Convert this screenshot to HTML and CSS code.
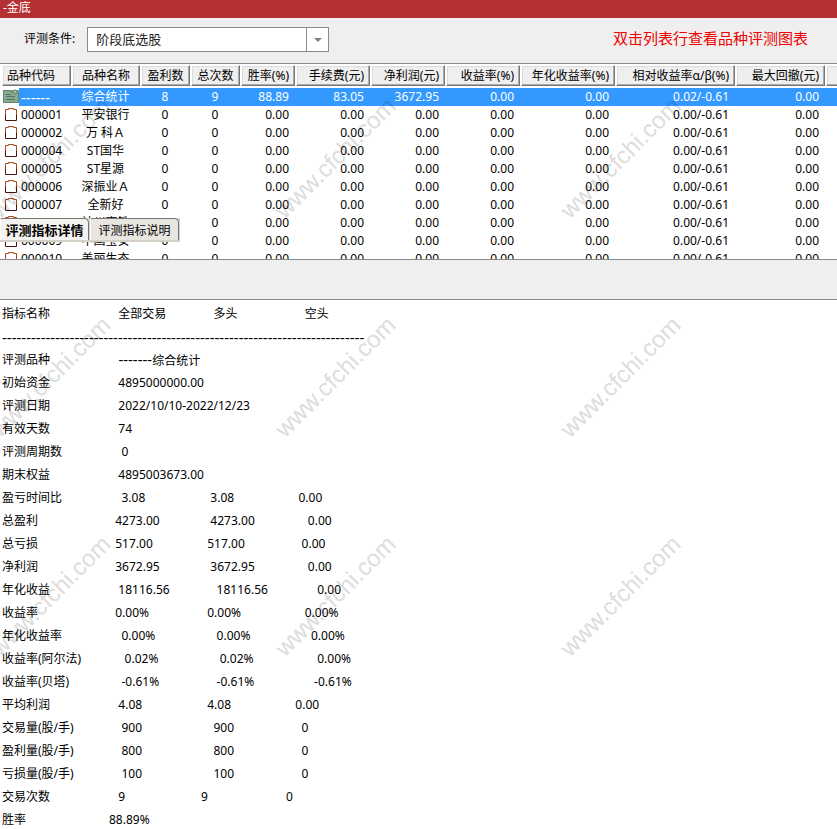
FILE: index.html
```
<!DOCTYPE html>
<html lang="zh-CN">
<head>
<meta charset="utf-8">
<title>金底</title>
<link rel="stylesheet" href="styles.css">
</head>
<body>
<svg class="defs" width="0" height="0" aria-hidden="true">
  <symbol id="clip" viewBox="0 0 19 18">
    <path d="M5.500 10V3.500H8.500V2.500H13.500V3.500H16.500V10" fill="none" stroke="#a8481c"/>
    <path d="M5.500 9V14.500H16.500V9" fill="none" stroke="#4a1410"/>
  </symbol>
  <symbol id="summary" viewBox="0 0 19 18">
    <rect x="3" y="2" width="16" height="13" rx="1" fill="#7fa083"/>
    <path d="M3.500 14.500V2.500H10L11.500 4.500H18.500V14.500Z" fill="#8aa98a" stroke="#5f8474"/>
    <path d="M6 6.500H11M6 8.500H15M6 11.500H15" stroke="#4f7468"/>
    <circle cx="15" cy="4" r="2" fill="#a5bc95" stroke="#5f8474"/>
  </symbol>
</svg>
<header class="titlebar">-金底</header>
<div class="page">
  <div class="toolbar">
    <label for="cond">评测条件:</label>
    <div class="combo">
      <select id="cond"><option>阶段底选股</option></select>
      <span class="combo-arrow"></span>
    </div>
    <p class="hint">双击列表行查看品种评测图表</p>
  </div>

  <section class="list">
    <table class="stocks">
      <colgroup><col class="w71"><col class="w69"><col class="w50"><col class="w50"><col class="w55"><col class="w75"><col class="w75"><col class="w75"><col class="w95"><col class="w120"><col class="w90"><col class="w90"></colgroup>
      <thead>
        <tr><th><span>品种代码</span></th><th><span>品种名称</span></th><th><span>盈利数</span></th><th><span>总次数</span></th><th><span>胜率(%)</span></th><th><span>手续费(元)</span></th><th><span>净利润(元)</span></th><th><span>收益率(%)</span></th><th><span>年化收益率(%)</span></th><th><span>相对收益率α/β(%)</span></th><th><span>最大回撤(元)</span></th><th><span>最大回撤比</span></th></tr>
      </thead>
      <tbody>
        <tr class="selected"><td><div class="code"><svg class="icon"><use href="#summary"/></svg><span class="dashes">------</span></div></td><td>综合统计</td><td>8</td><td>9</td><td>88.89</td><td>83.05</td><td>3672.95</td><td>0.00</td><td>0.00</td><td>0.02/-0.61</td><td>0.00</td><td></td></tr>
        <tr><td><div class="code"><svg class="icon"><use href="#clip"/></svg>000001</div></td><td>平安银行</td><td>0</td><td>0</td><td>0.00</td><td>0.00</td><td>0.00</td><td>0.00</td><td>0.00</td><td>0.00/-0.61</td><td>0.00</td><td></td></tr>
        <tr><td><div class="code"><svg class="icon"><use href="#clip"/></svg>000002</div></td><td>万 科Ａ</td><td>0</td><td>0</td><td>0.00</td><td>0.00</td><td>0.00</td><td>0.00</td><td>0.00</td><td>0.00/-0.61</td><td>0.00</td><td></td></tr>
        <tr><td><div class="code"><svg class="icon"><use href="#clip"/></svg>000004</div></td><td>ST国华</td><td>0</td><td>0</td><td>0.00</td><td>0.00</td><td>0.00</td><td>0.00</td><td>0.00</td><td>0.00/-0.61</td><td>0.00</td><td></td></tr>
        <tr><td><div class="code"><svg class="icon"><use href="#clip"/></svg>000005</div></td><td>ST星源</td><td>0</td><td>0</td><td>0.00</td><td>0.00</td><td>0.00</td><td>0.00</td><td>0.00</td><td>0.00/-0.61</td><td>0.00</td><td></td></tr>
        <tr><td><div class="code"><svg class="icon"><use href="#clip"/></svg>000006</div></td><td>深振业Ａ</td><td>0</td><td>0</td><td>0.00</td><td>0.00</td><td>0.00</td><td>0.00</td><td>0.00</td><td>0.00/-0.61</td><td>0.00</td><td></td></tr>
        <tr><td><div class="code"><svg class="icon"><use href="#clip"/></svg>000007</div></td><td>全新好</td><td>0</td><td>0</td><td>0.00</td><td>0.00</td><td>0.00</td><td>0.00</td><td>0.00</td><td>0.00/-0.61</td><td>0.00</td><td></td></tr>
        <tr><td><div class="code"><svg class="icon"><use href="#clip"/></svg>000008</div></td><td>神州高铁</td><td>0</td><td>0</td><td>0.00</td><td>0.00</td><td>0.00</td><td>0.00</td><td>0.00</td><td>0.00/-0.61</td><td>0.00</td><td></td></tr>
        <tr><td><div class="code"><svg class="icon"><use href="#clip"/></svg>000009</div></td><td>中国宝安</td><td>0</td><td>0</td><td>0.00</td><td>0.00</td><td>0.00</td><td>0.00</td><td>0.00</td><td>0.00/-0.61</td><td>0.00</td><td></td></tr>
        <tr><td><div class="code"><svg class="icon"><use href="#clip"/></svg>000010</div></td><td>美丽生态</td><td>0</td><td>0</td><td>0.00</td><td>0.00</td><td>0.00</td><td>0.00</td><td>0.00</td><td>0.00/-0.61</td><td>0.00</td><td></td></tr>
      </tbody>
    </table>
  </section>

  <div class="tabs" role="tablist">
    <button type="button" role="tab" class="tab active" aria-selected="true">评测指标详情</button>
    <button type="button" role="tab" class="tab" aria-selected="false">评测指标说明</button>
  </div>

  <div class="splitter"></div>

  <section class="details">
    <table class="report">
      <colgroup><col class="name"><col class="all"><col class="long"><col></colgroup>
      <thead>
        <tr><th>指标名称</th><th>   全部交易</th><th>    多头</th><th>      空头</th></tr>
      </thead>
      <tbody>
        <tr><td colspan="4" class="dashes">---------------------------------------------------------------------------</td></tr>
        <tr><td>评测品种</td><td>   <span class="dashes">-------</span>综合统计</td></tr>
        <tr><td>初始资金</td><td>   4895000000.00</td></tr>
        <tr><td>评测日期</td><td>   2022/10/10-2022/12/23</td></tr>
        <tr><td>有效天数</td><td>   74</td></tr>
        <tr><td>评测周期数</td><td>    0</td></tr>
        <tr><td>期末权益</td><td>   4895003673.00</td></tr>
        <tr><td>盈亏时间比</td><td>    3.08</td><td>   3.08</td><td>    0.00</td></tr>
        <tr><td>总盈利</td><td>  4273.00</td><td>   4273.00</td><td>       0.00</td></tr>
        <tr><td>总亏损</td><td>  517.00</td><td>  517.00</td><td>     0.00</td></tr>
        <tr><td>净利润</td><td>  3672.95</td><td>   3672.95</td><td>       0.00</td></tr>
        <tr><td>年化收益</td><td>   18116.56</td><td>     18116.56</td><td>          0.00</td></tr>
        <tr><td>收益率</td><td>  0.00%</td><td>  0.00%</td><td>      0.00%</td></tr>
        <tr><td>年化收益率</td><td>    0.00%</td><td>     0.00%</td><td>        0.00%</td></tr>
        <tr><td>收益率(阿尔法)</td><td>     0.02%</td><td>      0.02%</td><td>          0.00%</td></tr>
        <tr><td>收益率(贝塔)</td><td>    -0.61%</td><td>     -0.61%</td><td>         -0.61%</td></tr>
        <tr><td>平均利润</td><td>   4.08</td><td>  4.08</td><td>   0.00</td></tr>
        <tr><td>交易量(股/手)</td><td>    900</td><td>    900</td><td>     0</td></tr>
        <tr><td>盈利量(股/手)</td><td>    800</td><td>    800</td><td>     0</td></tr>
        <tr><td>亏损量(股/手)</td><td>    100</td><td>    100</td><td>     0</td></tr>
        <tr><td>交易次数</td><td>   9</td><td>9</td><td>0</td></tr>
        <tr><td>胜率</td><td>88.89%</td></tr>
      </tbody>
    </table>
  </section>

  <div class="watermarks" aria-hidden="true">
    <span>www.cfchi.com</span><span>www.cfchi.com</span><span>www.cfchi.com</span>
    <span>www.cfchi.com</span><span>www.cfchi.com</span><span>www.cfchi.com</span>
    <span>www.cfchi.com</span><span>www.cfchi.com</span><span>www.cfchi.com</span>
  </div>
</div>
</body>
</html>
```
FILE: styles.css
```
* { box-sizing: border-box; }
body {
  margin: 0;
  background: #fff;
  color: #000;
  font: 12px/18px "Noto Sans", "Noto Sans CJK SC", sans-serif;
}
.defs { position: absolute; }
.titlebar {
  height: 18px;
  padding-left: 3px;
  line-height: 15px;
  color: #fff;
  background: #b43032;
}
.page { position: relative; overflow: hidden; }

.toolbar {
  display: flex;
  align-items: center;
  height: 45px;
  padding: 0 29px 3px 24px;
  background: #efefef;
}
.combo {
  display: flex;
  position: relative;
  width: 242px;
  height: 25px;
  margin-left: 12px;
}
.combo select {
  width: 100%;
  padding: 0 30px 0 8px;
  border: 1px solid #8a8a8a;
  border-radius: 0;
  appearance: none;
  background: #fff;
  color: #222;
  font: 13px "Noto Sans", "Noto Sans CJK SC", sans-serif;
}
.combo-arrow {
  position: absolute;
  top: 0;
  right: 0;
  width: 23px;
  height: 100%;
  border: 1px solid #8a8a8a;
  pointer-events: none;
}
.combo-arrow::after {
  content: "";
  position: absolute;
  top: 10px;
  left: 7px;
  border: 4px solid transparent;
  border-top-color: #808080;
  border-bottom: 0;
}
.hint {
  margin: 0 0 0 auto;
  padding-bottom: 2px;
  color: #f00000;
  font-size: 15px;
}

.list {
  height: 197px;
  padding-top: 1px;
  overflow: hidden;
  border-top: 1px solid #8a8a8a;
  border-bottom: 1px solid #8a8a8a;
  background: #fff;
}
.stocks {
  width: 915px;
  table-layout: fixed;
  border-collapse: collapse;
}
.w50 { width: 50px; }
.w55 { width: 55px; }
.w69 { width: 69px; }
.w71 { width: 71px; }
.w75 { width: 75px; }
.w90 { width: 90px; }
.w95 { width: 95px; }
.w120 { width: 120px; }
.stocks th {
  padding: 0 0 2px;
  font-weight: normal;
  text-align: right;
}
.stocks th span {
  display: block;
  height: 21px;
  margin-left: 1px;
  padding-right: 5px;
  border: 1px solid #777;
  border-top-color: #fff;
  border-left-color: #fff;
  background: #efefef;
  box-shadow: inset -1px -1px #aaa, inset 1px 1px #dcdcdc;
  line-height: 19px;
  white-space: nowrap;
}
.stocks td {
  height: 18px;
  padding: 0 6px 0 0;
  text-align: right;
  white-space: nowrap;
}
.stocks td:nth-child(-n+4) { padding: 0; text-align: center; }
.stocks th:nth-child(-n+4) span { padding: 0; text-align: center; }
.stocks th:first-child span { margin-left: 2px; padding-left: 4px; text-align: left; }
.code { display: flex; }
.icon { flex: none; width: 19px; height: 18px; margin-right: 2px; background: #fff; }
.dashes { font-size: 15px; }
.selected { background: #3399ff; color: #fff; }

.tabs {
  display: flex;
  gap: 1px;
  position: absolute;
  z-index: 2;
  top: 200px;
  left: 0;
  height: 24px;
  padding-right: 1px;
  background: #d4d0c8;
}
.tab {
  width: 89px;
  height: 22px;
  padding: 0;
  border: 1px solid #777;
  border-left-color: #fff;
  border-bottom: 0;
  border-radius: 3px 5px 0 0;
  background: #e8e6e1;
  font: 12px "Noto Sans CJK SC", sans-serif;
}
.tab.active { background: #f5f3ef; font-size: 13px; font-weight: bold; }

.splitter {
  height: 40px;
  border-bottom: 1px solid #8a8a8a;
  background: #efefef;
}

.details { padding: 2px 0 0 2px; }
.report { width: 100%; table-layout: fixed; border-collapse: collapse; }
.report .name { width: 107px; }
.report .all { width: 92px; }
.report .long { width: 85px; }
.report th, .report td {
  height: 23px;
  padding: 0;
  font-weight: normal;
  text-align: left;
  white-space: pre;
  line-height: 18px;
}

.watermarks {
  display: grid;
  position: absolute;
  z-index: 1;
  top: 30px;
  left: -92px;
  grid-template-columns: repeat(3, 285px);
  grid-auto-rows: 219px;
  overflow: hidden;
  pointer-events: none;
}
.watermarks span {
  place-self: center;
  color: rgba(0, 0, 0, .15);
  font: 24px "Liberation Sans", sans-serif;
  -webkit-text-stroke: 1px rgba(0, 0, 0, .04);
  transform: rotate(-45deg);
}
```
